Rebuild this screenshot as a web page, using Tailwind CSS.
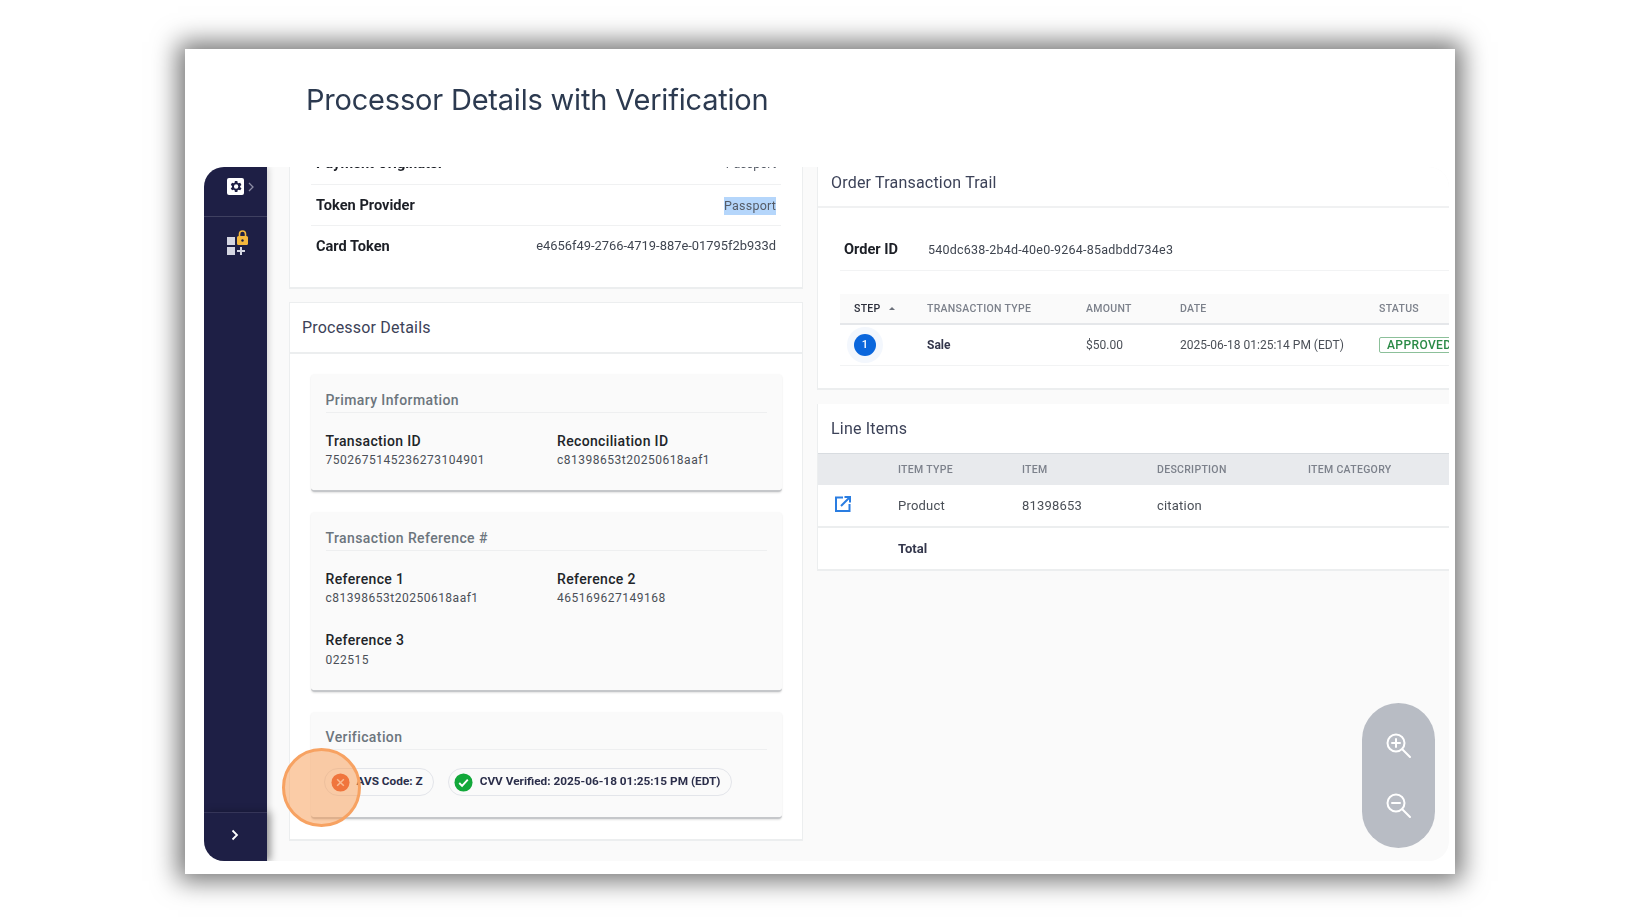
<!DOCTYPE html>
<html lang="en">
<head>
  <meta charset="UTF-8">
  <title>Processor Details with Verification</title>
  <script src="https://cdn.jsdelivr.net/npm/@tailwindcss/browser@4"></script>
</head>
<body class="bg-white h-[924px] w-[1640px] overflow-hidden font-['Roboto',sans-serif]">
  <div class="ml-[185px] mt-[49px] w-[1270px] h-[825px] bg-white shadow-[0_0_24px_7px_rgba(0,0,0,0.55)] blur-[0.6px]">
    <div class="h-[118px] pl-[121px] pb-[16px] flex items-center">
      <h1 class="font-['Inter',sans-serif] text-[29px] tracking-[-0.2px] text-[#2c3a50]">Processor Details with Verification</h1>
    </div>

    <div class="relative ml-[19px] w-[1245px] h-[694px] flex rounded-[20px] overflow-hidden bg-[#fafafa]">
      <!-- sidebar -->
      <aside class="w-[63px] shrink-0 flex flex-col bg-[#1e1f45] shadow-[2px_0_6px_rgba(0,0,0,0.15)]">
        <div class="h-[50px] flex items-center justify-center gap-[3px] border-b border-white/15 pl-[10px] pb-[10px]">
          <span class="w-[17px] h-[17px] rounded-[2px] bg-white flex items-center justify-center">
            <svg class="w-[15px] h-[15px]" viewBox="0 0 24 24" fill="#1e1f45"><path d="M19.4 13a7.5 7.5 0 0 0 0-2l2.1-1.6-2-3.5-2.5 1a7.6 7.6 0 0 0-1.7-1L15 3.2h-4l-.4 2.7a7.6 7.6 0 0 0-1.7 1l-2.5-1-2 3.500L6.500 11a7.500 7.500 0 0 0 0 2l-2.100 1.600 2 3.500 2.500-1a7.600 7.600 0 0 0 1.700 1l.4 2.700h4l.4-2.700a7.600 7.600 0 0 0 1.700-1l2.500 1 2-3.500zM13 15.500a3.500 3.500 0 1 1 0-7 3.500 3.500 0 0 1 0 7z"/></svg>
          </span>
          <svg class="w-[8px] h-[10px]" viewBox="0 0 8 10" fill="none" stroke="#8d8ea6" stroke-width="1.3"><path d="M2 1l4 4-4 4"/></svg>
        </div>
        <div class="flex-1 pt-[13px] pl-[2px] flex justify-center">
          <svg class="w-[26px] h-[28px]" viewBox="0 0 26 28">
            <rect x="3" y="7" width="8" height="8" fill="#d5d6e2"/>
            <rect x="3" y="17" width="8" height="8" fill="#d5d6e2"/>
            <path d="M13 21h8M17 17v8" stroke="#d5d6e2" stroke-width="2"/>
            <rect x="13" y="6" width="11" height="9" rx="1.5" fill="#f5b83d"/>
            <path d="M15.5 6V4a3 3 0 0 1 6 0v2" fill="none" stroke="#f5b83d" stroke-width="1.6"/>
            <circle cx="18.5" cy="10.5" r="1.2" fill="#1e1f45"/>
          </svg>
        </div>
        <div class="h-[49px] pb-[5px] pr-[2px] border-t border-white/10 flex items-center justify-center shadow-[4px_0_8px_rgba(0,0,0,0.3)]">
          <svg class="w-[10px] h-[12px]" viewBox="0 0 10 12" fill="none" stroke="#fff" stroke-width="1.8"><path d="M2.5 1.5 7 6l-4.5 4.5"/></svg>
        </div>
      </aside>

      <!-- content -->
      <main class="flex gap-[14px] pl-[22px] min-w-0 flex-1 overflow-hidden">
        <section class="w-[514px] shrink-0 flex flex-col gap-[13px]">
          <div class="h-[122px] shrink-0 overflow-hidden flex flex-col justify-end bg-white border border-[#eceeef] border-t-0 border-b-2 px-[21px] pb-[20px]">
            <div class="h-[41px] shrink-0 flex items-center justify-between border-b border-[#f0f1f2] px-[5px]">
              <span class="text-[14.6px] font-bold text-[#1c1f26]">Payment Originator</span>
              <span class="text-[12.5px] text-[#555b66]">Passport</span>
            </div>
            <div class="h-[41px] shrink-0 pt-[2px] flex items-center justify-between border-b border-[#f0f1f2] px-[5px]">
              <span class="text-[14.6px] font-bold text-[#1c1f26]">Token Provider</span>
              <span class="text-[12.5px] leading-[18px] tracking-[0.2px] text-[#555b66] bg-[#b5d6fb]">Passport</span>
            </div>
            <div class="h-[41px] shrink-0 flex items-center justify-between px-[5px]">
              <span class="text-[14.6px] font-bold text-[#1c1f26]">Card Token</span>
              <span class="text-[12.9px] -mt-[2px] text-[#3f4550]">e4656f49-2766-4719-887e-01795f2b933d</span>
            </div>
          </div>

          <div class="h-[539px] shrink-0 bg-white border border-[#eceeef] border-b-2">
            <div class="h-[51px] flex items-center px-[12px] border-b-2 border-[#eceeef] text-[16px] tracking-[0.2px] text-[#3c4258]">Processor Details</div>
            <div class="px-[20.5px] pt-[20px] flex flex-col gap-[20px]">
              <div class="h-[118px] rounded-[4px] bg-[#fafafa] border-b-2 border-[#c5c7ca] px-[15px] pt-[17px] shadow-[0_1px_2px_rgba(0,0,0,0.12)]">
                <h3 class="text-[14px] leading-[19px] font-medium tracking-[0.4px] text-[#6c757d] border-b border-[#eeeff0] pb-[2px]">Primary Information</h3>
                <div class="grid grid-cols-[231.5px_1fr] mt-[18px]">
                  <div>
                    <div class="text-[14px] leading-[20px] font-medium tracking-[0.35px] text-[#212529]">Transaction ID</div>
                    <div class="text-[12px] leading-[19px] tracking-[0.5px] text-[#4a4f57]">7502675145236273104901</div>
                  </div>
                  <div>
                    <div class="text-[14px] leading-[20px] font-medium tracking-[0.35px] text-[#212529]">Reconciliation ID</div>
                    <div class="text-[12px] leading-[19px] tracking-[0.5px] text-[#4a4f57]">c81398653t20250618aaf1</div>
                  </div>
                </div>
              </div>

              <div class="h-[180px] rounded-[4px] bg-[#fafafa] border-b-2 border-[#c5c7ca] px-[15px] pt-[17px] shadow-[0_1px_2px_rgba(0,0,0,0.12)]">
                <h3 class="text-[14px] leading-[19px] font-medium tracking-[0.4px] text-[#6c757d] border-b border-[#eeeff0] pb-[2px]">Transaction Reference #</h3>
                <div class="grid grid-cols-[231.5px_1fr] gap-y-[22px] mt-[18px]">
                  <div>
                    <div class="text-[14px] leading-[20px] font-medium tracking-[0.35px] text-[#212529]">Reference 1</div>
                    <div class="text-[12px] leading-[19px] tracking-[0.5px] text-[#4a4f57]">c81398653t20250618aaf1</div>
                  </div>
                  <div>
                    <div class="text-[14px] leading-[20px] font-medium tracking-[0.35px] text-[#212529]">Reference 2</div>
                    <div class="text-[12px] leading-[19px] tracking-[0.5px] text-[#4a4f57]">465169627149168</div>
                  </div>
                  <div>
                    <div class="text-[14px] leading-[20px] font-medium tracking-[0.35px] text-[#212529]">Reference 3</div>
                    <div class="text-[12px] leading-[20px] tracking-[0.5px] text-[#4a4f57]">022515</div>
                  </div>
                </div>
              </div>

              <div class="h-[107px] rounded-[4px] bg-[#fafafa] border-b-2 border-[#c5c7ca] px-[15px] pt-[16px] shadow-[0_1px_2px_rgba(0,0,0,0.12)]">
                <h3 class="text-[14px] leading-[19px] font-medium tracking-[0.4px] text-[#6c757d] border-b border-[#eeeff0] pb-[2px]">Verification</h3>
                <div class="flex gap-[14px] mt-[18px] -ml-[2px]">
                  <div class="h-[28px] pl-[6px] pr-[10px] flex items-center gap-[7px] rounded-full border border-[#e3e5ea] text-[11.8px] font-bold text-[#2b2e4a]">
                    <svg class="w-[19px] h-[19px]" viewBox="0 0 20 20"><circle cx="10" cy="10" r="9.5" fill="#e8502a"/><path d="M6.5 6.5l7 7M13.500 6.500l-7 7" stroke="#fff" stroke-width="1.6" stroke-opacity="0.8"/></svg>
                    AVS Code: Z
                  </div>
                  <div class="h-[28px] pl-[5px] pr-[11px] flex items-center gap-[7px] rounded-full border border-[#e3e5ea] text-[11.8px] font-bold text-[#2b2e4a]">
                    <svg class="w-[19px] h-[19px]" viewBox="0 0 20 20"><circle cx="10" cy="10" r="9.5" fill="#12a83a"/><path d="M5.500 10.500l3 3 6-6.500" fill="none" stroke="#fff" stroke-width="2"/></svg>
                    CVV Verified: 2025-06-18 01:25:15 PM (EDT)
                  </div>
                </div>
              </div>
            </div>
          </div>
        </section>

        <section class="w-[660px] shrink-0 flex flex-col gap-[14px]">
          <div class="h-[223px] shrink-0 bg-white border-l border-b-2 border-[#eceeef]">
            <div class="h-[41px] border-b-2 border-[#f0f1f2] flex items-center pl-[13px] pb-[8px] text-[16px] tracking-[0.2px] text-[#3c4258]">Order Transaction Trail</div>
            <div class="pl-[22px]">
              <div class="h-[63px] pt-[22px] flex items-center pl-[4px] border-b border-[#f2f3f4]">
                <span class="w-[84px] text-[14.6px] font-bold text-[#1c1f26]">Order ID</span>
                <span class="text-[12.5px] tracking-[0.22px] text-[#3f4550]">540dc638-2b4d-40e0-9264-85adbdd734e3</span>
              </div>
              <div class="mt-[23px] h-[31px] flex items-center bg-[#fafafa] border-b-2 border-[#e5e7ea] text-[10.500px] font-medium tracking-[0.3px] text-[#7c818b]">
                <span class="w-[87px] pl-[14px] text-[#2b2e3a] flex items-center gap-[8px]">STEP <span class="w-0 h-0 border-x-[3px] border-x-transparent border-b-[3px] border-b-[#6c717b]"></span></span>
                <span class="w-[159px]">TRANSACTION TYPE</span>
                <span class="w-[94px]">AMOUNT</span>
                <span class="w-[199px]">DATE</span>
                <span>STATUS</span>
              </div>
              <div class="h-[41px] flex items-center border-b border-[#f2f3f4] text-[12px] text-[#4a4f57]">
                <span class="w-[87px] pl-[7px]">
                  <span class="w-[36px] h-[36px] rounded-full bg-[#f3f7fd] flex items-center justify-center">
                    <span class="w-[22px] h-[22px] rounded-full bg-[#0a66dc] text-white text-[11px] font-medium flex items-center justify-center">1</span>
                  </span>
                </span>
                <span class="w-[159px] font-bold text-[#34374c]">Sale</span>
                <span class="w-[94px]">$50.00</span>
                <span class="w-[199px]">2025-06-18 01:25:14 PM (EDT)</span>
                <span class="h-[16px] px-[7px] flex items-center rounded-[2px] border border-[#8cc09a] text-[#2a8a46] font-medium tracking-[0.4px]">APPROVED</span>
              </div>
            </div>
          </div>

          <div class="h-[167px] shrink-0 bg-white border-l border-b-2 border-[#eceeef]">
            <div class="h-[49px] flex items-center pl-[13px] text-[16px] tracking-[0.2px] text-[#3c4258]">Line Items</div>
            <div class="h-[32px] flex items-center bg-[#e8eaed] border-t border-[#d8dce0] text-[10.500px] font-medium tracking-[0.3px] text-[#7c818b]">
              <span class="w-[80px]"></span>
              <span class="w-[124px]">ITEM TYPE</span>
              <span class="w-[135px]">ITEM</span>
              <span class="w-[151px]">DESCRIPTION</span>
              <span>ITEM CATEGORY</span>
            </div>
            <div class="h-[43px] flex items-center border-b-2 border-[#eceeef] text-[13px] tracking-[0.2px] text-[#4a4f57]">
              <span class="w-[80px] pl-[16px] -mt-[3px]">
                <svg class="w-[18px] h-[18px]" viewBox="0 0 18 18" fill="none" stroke="#2a7de1" stroke-width="2"><path d="M9 2.500H2v13.500h13.500V9"/><path d="M7 11l8.500-8.500M10.500 2H16v5.500"/></svg>
              </span>
              <span class="w-[124px]">Product</span>
              <span class="w-[135px]">81398653</span>
              <span>citation</span>
            </div>
            <div class="h-[41px] flex items-center pl-[80px] text-[13px] font-bold text-[#34374c]">Total</div>
          </div>
        </section>
      </main>

      <!-- zoom control floats over the page -->
      <div class="absolute left-[1158px] top-[536px] w-[73px] h-[145px] rounded-full bg-[#b8bcc4] flex flex-col items-center justify-center gap-[33px]">
        <svg class="w-[27px] h-[27px]" viewBox="0 0 27 27" fill="none" stroke="#fff" stroke-width="2" stroke-linecap="round"><circle cx="11" cy="11" r="8.500"/><path d="M17.500 17.500 25 25M7 11h8M11 7v8"/></svg>
        <svg class="w-[27px] h-[27px]" viewBox="0 0 27 27" fill="none" stroke="#fff" stroke-width="2" stroke-linecap="round"><circle cx="11" cy="11" r="8.500"/><path d="M17.500 17.500 25 25M7 11h8"/></svg>
      </div>

      <!-- click marker over the AVS chip -->
      <div class="absolute left-[78px] top-[581px] w-[79px] h-[79px] rounded-full bg-[#f79a4f]/50 border-[3px] border-[#f7a262]"></div>
    </div>
  </div>
</body>
</html>
